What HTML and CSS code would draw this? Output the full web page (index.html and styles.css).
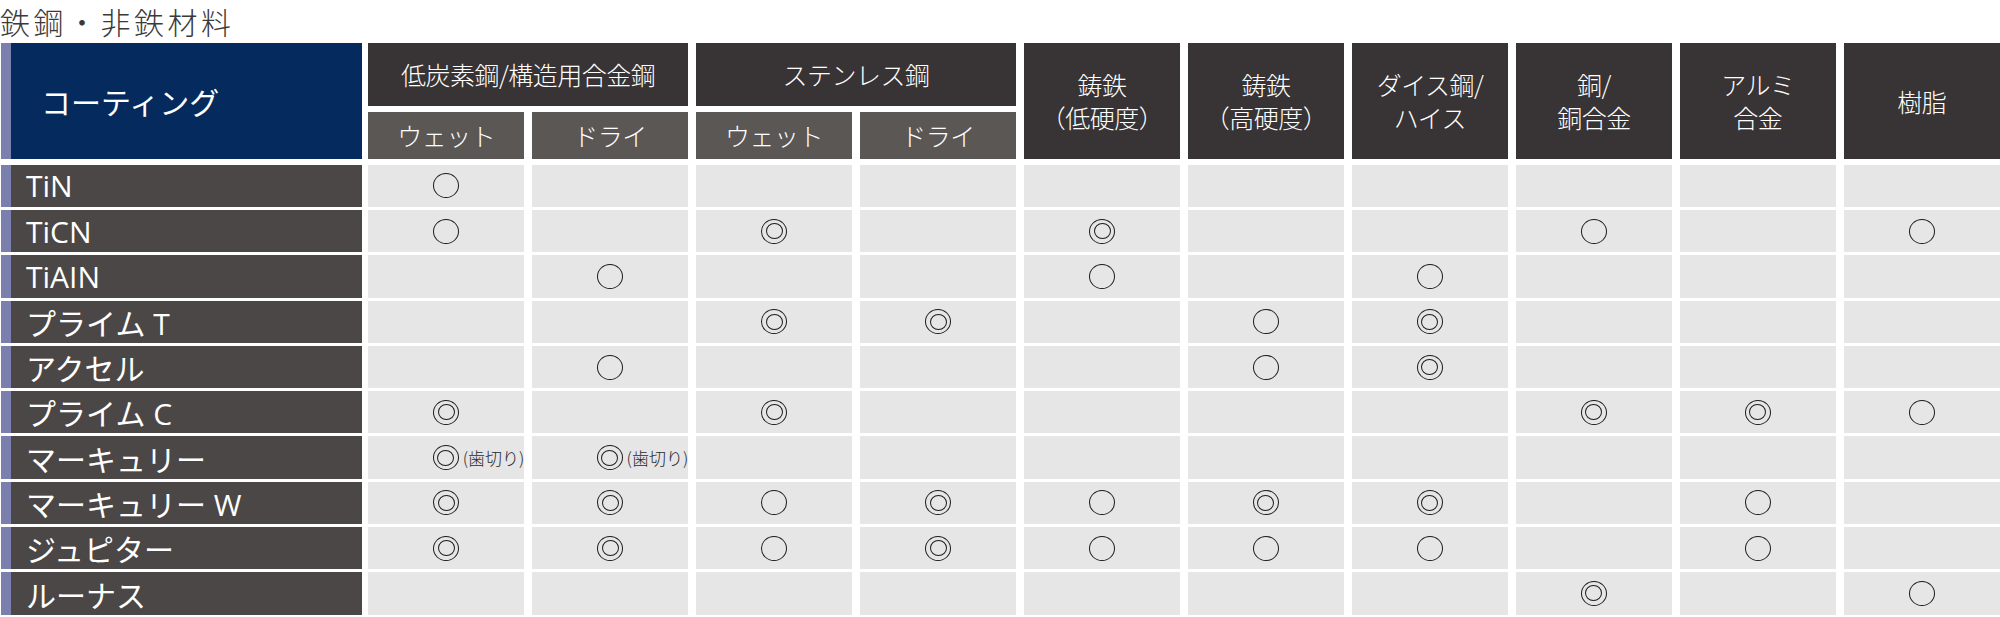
FILE: index.html
```html
<!DOCTYPE html>
<html lang="ja">
<head>
<meta charset="utf-8">
<title>鉄鋼・非鉄材料</title>
<link rel="stylesheet" href="styles.css">
</head>
<body>
<h1 class="title">鉄鋼・非鉄材料</h1>
<div class="table">
  <div class="head">
    <div class="coat">コーティング</div>
    <div class="grp span2">低炭素鋼/構造用合金鋼</div>
    <div class="grp span2">ステンレス鋼</div>
    <div class="grp tall">鋳鉄<br>（低硬度）</div>
    <div class="grp tall">鋳鉄<br>（高硬度）</div>
    <div class="grp tall">ダイス鋼/<br>ハイス</div>
    <div class="grp tall">銅/<br>銅合金</div>
    <div class="grp tall">アルミ<br>合金</div>
    <div class="grp tall">樹脂</div>
    <div class="sub">ウェット</div>
    <div class="sub">ドライ</div>
    <div class="sub">ウェット</div>
    <div class="sub">ドライ</div>
  </div>
  <div class="body">
    <div class="label">TiN</div>
    <div class="c"><span class="o"></span></div><div class="c"></div><div class="c"></div><div class="c"></div><div class="c"></div><div class="c"></div><div class="c"></div><div class="c"></div><div class="c"></div><div class="c"></div>

    <div class="label">TiCN</div>
    <div class="c"><span class="o"></span></div><div class="c"></div><div class="c"><span class="oo"></span></div><div class="c"></div><div class="c"><span class="oo"></span></div><div class="c"></div><div class="c"></div><div class="c"><span class="o"></span></div><div class="c"></div><div class="c"><span class="o"></span></div>

    <div class="label">TiAIN</div>
    <div class="c"></div><div class="c"><span class="o"></span></div><div class="c"></div><div class="c"></div><div class="c"><span class="o"></span></div><div class="c"></div><div class="c"><span class="o"></span></div><div class="c"></div><div class="c"></div><div class="c"></div>

    <div class="label">プライム T</div>
    <div class="c"></div><div class="c"></div><div class="c"><span class="oo"></span></div><div class="c"><span class="oo"></span></div><div class="c"></div><div class="c"><span class="o"></span></div><div class="c"><span class="oo"></span></div><div class="c"></div><div class="c"></div><div class="c"></div>

    <div class="label">アクセル</div>
    <div class="c"></div><div class="c"><span class="o"></span></div><div class="c"></div><div class="c"></div><div class="c"></div><div class="c"><span class="o"></span></div><div class="c"><span class="oo"></span></div><div class="c"></div><div class="c"></div><div class="c"></div>

    <div class="label">プライム C</div>
    <div class="c"><span class="oo"></span></div><div class="c"></div><div class="c"><span class="oo"></span></div><div class="c"></div><div class="c"></div><div class="c"></div><div class="c"></div><div class="c"><span class="oo"></span></div><div class="c"><span class="oo"></span></div><div class="c"><span class="o"></span></div>

    <div class="label">マーキュリー</div>
    <div class="c"><span class="oo"></span><span class="note">(歯切り)</span></div><div class="c"><span class="oo"></span><span class="note">(歯切り)</span></div><div class="c"></div><div class="c"></div><div class="c"></div><div class="c"></div><div class="c"></div><div class="c"></div><div class="c"></div><div class="c"></div>

    <div class="label">マーキュリー W</div>
    <div class="c"><span class="oo"></span></div><div class="c"><span class="oo"></span></div><div class="c"><span class="o"></span></div><div class="c"><span class="oo"></span></div><div class="c"><span class="o"></span></div><div class="c"><span class="oo"></span></div><div class="c"><span class="oo"></span></div><div class="c"></div><div class="c"><span class="o"></span></div><div class="c"></div>

    <div class="label">ジュピター</div>
    <div class="c"><span class="oo"></span></div><div class="c"><span class="oo"></span></div><div class="c"><span class="o"></span></div><div class="c"><span class="oo"></span></div><div class="c"><span class="o"></span></div><div class="c"><span class="o"></span></div><div class="c"><span class="o"></span></div><div class="c"></div><div class="c"><span class="o"></span></div><div class="c"></div>

    <div class="label">ルーナス</div>
    <div class="c"></div><div class="c"></div><div class="c"></div><div class="c"></div><div class="c"></div><div class="c"></div><div class="c"></div><div class="c"><span class="oo"></span></div><div class="c"></div><div class="c"><span class="o"></span></div>
  </div>
</div>
</body>
</html>
```

FILE: styles.css
```css
html, body {
  margin: 0;
  padding: 0;
  background: #ffffff;
}

body {
  width: 2000px;
  font-family: "Noto Sans CJK JP", "Noto Sans", sans-serif;
  overflow: hidden;
}

.title {
  margin: 0;
  height: 43.3px;
  font-size: 30px;
  line-height: 43px;
  font-weight: 300;
  letter-spacing: 3.5px;
  color: #3a3a3a;
}

.table {
  margin-left: 1px;
}

.head,
.body {
  display: grid;
  grid-template-columns: 359.4px repeat(10, minmax(0, 1fr));
  column-gap: 7.6px;
}

.head {
  grid-template-rows: 63px 47.3px;
  row-gap: 5.7px;
}

.body {
  margin-top: 5.4px;
  grid-auto-rows: 42.3px;
  row-gap: 3px;
}

.coat,
.label {
  margin-right: -1.6px;
  border-left: 10.5px solid #7a7fad;
  color: #ffffff;
  display: flex;
  align-items: center;
}

.coat {
  grid-row: span 2;
  background: #052b5e;
  padding-left: 30px;
  font-size: 30px;
  font-weight: 400;
}

.label {
  background: #4b4746;
  padding-left: 15px;
  font-family: "Open Sans", "Noto Sans CJK JP", sans-serif;
  font-size: 30px;
  font-weight: 400;
  white-space: pre;
}

.grp,
.sub {
  color: #ffffff;
  display: flex;
  align-items: center;
  justify-content: center;
  text-align: center;
  font-size: 25px;
  line-height: 33px;
  font-weight: 300;
  letter-spacing: -0.5px;
}

.grp {
  background: #383334;
}

.span2 {
  grid-column: span 2;
}

.tall {
  grid-row: span 2;
}

.sub {
  background: #5b5755;
}

.c {
  background: #e5e6e5;
  display: grid;
  grid-template-columns: 1fr auto 1fr;
  align-items: center;
}

.o,
.oo {
  grid-column: 2;
  box-sizing: border-box;
  width: 26px;
  height: 25px;
  border: 1.4px solid #1c1c1c;
  border-radius: 50%;
}

.oo {
  display: flex;
  align-items: center;
  justify-content: center;
}

.oo::after {
  content: "";
  box-sizing: border-box;
  width: 17px;
  height: 16px;
  border: 1.3px solid #1c1c1c;
  border-radius: 50%;
}

.note {
  grid-column: 3;
  justify-self: start;
  margin-left: 4px;
  font-size: 17px;
  line-height: 1;
  font-weight: 300;
  color: #2a2a2a;
  white-space: nowrap;
}
```
